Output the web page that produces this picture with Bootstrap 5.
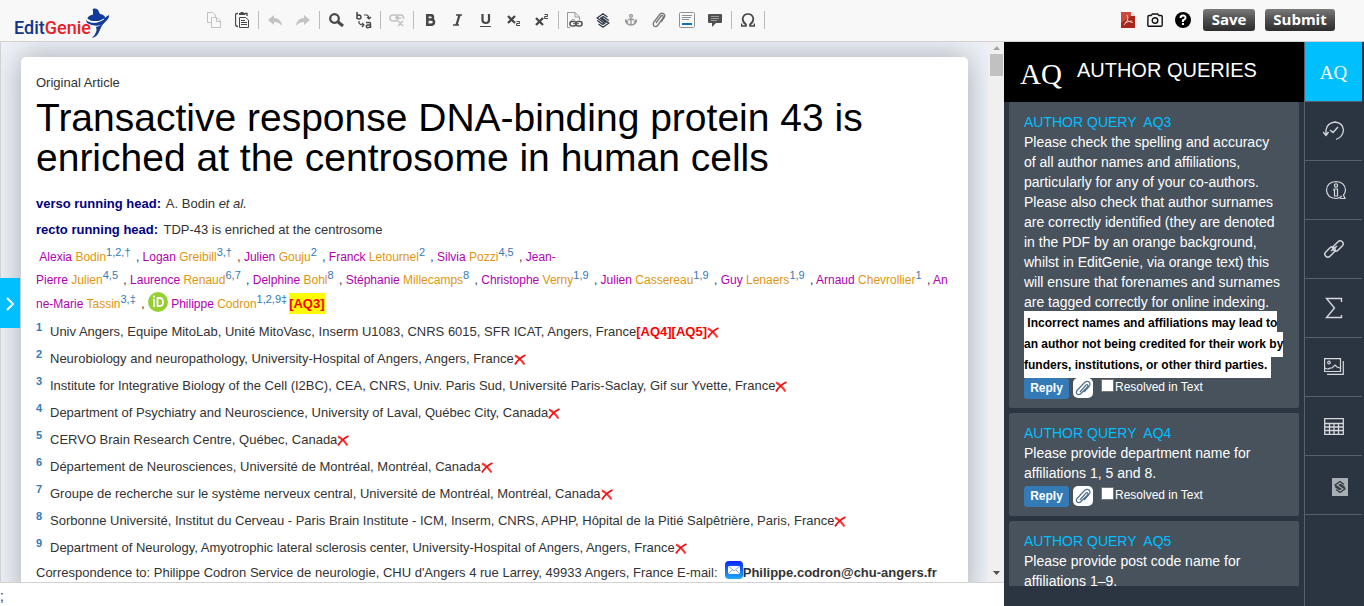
<!DOCTYPE html>
<html lang="en">
<head>
<meta charset="utf-8">
<meta name="viewport" content="width=device-width, initial-scale=1">
<title>EditGenie</title>
<link href="https://cdn.jsdelivr.net/npm/bootstrap@5.3.0/dist/css/bootstrap.min.css" rel="stylesheet">
<style>
body{font-family:"Liberation Sans",Arial,sans-serif;font-size:13px;line-height:20px;color:#333;background:#fff}
button{font:inherit}
.topbar{background:#f8f8f8;border-bottom:1px solid #d1d1d1;height:42px;padding:0 29px 1px 14px}
.logo{font-family:Roboto,"Liberation Sans",sans-serif;font-size:18px;font-weight:500;line-height:24px;color:#14348c;padding-top:16px;width:186px}
.logo b{font-weight:500;color:#ee1c25}
.logo svg{position:absolute;left:72px;top:8px}
.tool{width:28px;height:28px;padding:0;border:0;background:none;display:flex;align-items:center;justify-content:center;flex:none;color:#474747}
.tool.off{color:#c2c2c2}
.sep{width:1px;height:18px;background:#bcbcbc;margin:0 2px;flex:none}
.act{border:0;border-radius:3px;background:linear-gradient(#7a7a7a,#4c4c4c 50%,#2c2c2c);color:#fff;font-family:"Open Sans",sans-serif;font-weight:700;font-size:15px;line-height:20px;height:22px;padding:0 0 2px}
.act.save{width:52px}.act.submit{width:70px;margin-left:10px}
.plain{border:0;background:none;padding:0;display:flex}
.pdf{margin-right:3px}
.desk{background:#eef2f8;border-left:1px solid #d1d1d1;border-bottom:1px solid #d1d1d1}
.paper{background:#fff;margin:15px 20px 0;padding:16px 15px 15px;border-radius:5px 5px 0 0;box-shadow:0 0 30px #a4a8ae}
.paper h1{font-size:39px;line-height:40px;color:#000;font-weight:400;margin:5px 0 16px}
.track{width:16px;background:#f0f0f0}
.thumb{height:22px;width:13px;background:#c1c1c1}
.runhead{line-height:20px;margin-bottom:6px}
.runhead b{color:#000080;margin-right:2px}
.authors{font-size:12px;line-height:23px;margin:0 0 2px;white-space:nowrap}
.authors i{font-style:normal;color:#b000b0}
.authors u{text-decoration:none;color:#e0960c}
sup{color:#337ab7;line-height:0;font-size:11px;top:-5px}
.authors sup{margin-right:2px}
.aff{display:flex;line-height:27px;white-space:nowrap}
.aff sup{width:14px;font-size:11px;font-weight:700;line-height:19px;top:0}
.aff svg,.orcid{flex:none}
.cross{width:12px;height:12px;margin:9px 0 0}
.corr{margin-top:2px}
.aq{color:#f00;font-weight:700}
.aq.now{background:#ff0;padding:3px 0;font-size:13px}
.drawer{left:0;top:236px;width:20px;height:50px;border:0;padding:0;background:#00bfff;z-index:2}
.foot{height:23px;font-size:14px;line-height:27px}
.panel{width:300px;background:#2b3541}
.rail{width:60px;background:#2b3541;border-left:1px solid #56616c;padding-right:2px}
.phead{background:#000;color:#fff;height:60px;padding:0 16px}
.phead span{font-family:"Liberation Serif",serif;font-size:29px;padding-top:3px}
.phead h2{font-size:20px;line-height:24px;margin:0 0 4px 15px;font-weight:400}
.queries{padding:0 5px;margin-bottom:20px}
.query{background:#47525d;color:#fff;border-radius:2px;padding:10px 15px 9px;margin-bottom:5px;font-size:14px;line-height:20px}
.query h3{font-size:14px;line-height:20px;margin:0;font-weight:400;color:#00bfff;white-space:pre}
.query p{margin:0}
.query .warn{font-size:12px;line-height:21px;font-weight:700;color:#000;margin:1px 0 -1px}
.warn mark{padding:5px 0 6px;background:#fff;color:#000}
.reply{border:0;border-radius:3px;background:#337ab7;color:#fff;font-weight:700;font-size:12px;line-height:21px;width:45px;height:21px;padding:0}
.clip{width:20px;height:20px;border:0;border-radius:5px;background:#fff;padding:0;margin:0 8px 0 4px;display:flex;align-items:center;justify-content:center}
.query .form-check-input{width:13px;height:13px;border-radius:0;border:1px solid #777;margin:1px 0 0;float:none}
.query label{font-size:12px;line-height:18px;margin-left:1px}
.ctl{margin-top:3px}
.rbtn{height:59px;border:0;border-bottom:1px solid #56616c;background:none;color:#d5d9dc;padding:0;display:flex;align-items:center;justify-content:center}
.rbtn.on{height:60px;background:#00bfff;color:#fff;font-family:"Liberation Serif",serif;font-size:19px;padding-top:3px}
svg{display:block}
.inl{display:inline-block}
.orcid{margin:-6px 0 -2px;vertical-align:-2px}
.mail{margin:-4px 0 0;vertical-align:-2px}
</style>
</head>
<body class="vh-100 d-flex flex-column overflow-hidden">
<header class="topbar d-flex align-items-center flex-shrink-0">
  <div class="logo position-relative flex-shrink-0">Edit<b>Genie</b>
    <svg width="24" height="31" viewBox="0 0 24 31"><path d="M7 3Q6 1 8 0.500Q12 0 13 4L14 6Q19 7 19 9.500Q18 12 12 13Q4 13.500 1.500 10.500Q2 7.500 7 6.500Z" fill="#123a9a"/><path d="M0 12Q8 17 16 12Q21 8 23 7Q24 10 17 16Q10 20 1 15Z" fill="#123a9a"/><path d="M1 12.500Q9 17 18 11" fill="none" stroke="#fff"/><path d="M10 19Q17 17 16 14L20 12Q15 18 13 24Q11 29 6 30Q12 24 10 19Z" fill="#1a3f92"/></svg>
  </div>
  <div class="d-flex align-items-center" role="toolbar" aria-label="Formatting">
    <button class="tool off" aria-label="Copy"><svg width="14" height="16" fill="none" stroke="currentColor"><path d="M4 10.500H.5V.5H6L8.500 3V5M4.500 5.500H10L13.500 9V15.500H4.500ZM9.500 5.500V9.500H13.500"/></svg></button>
    <button class="tool" aria-label="Paste"><svg width="14" height="16" fill="none" stroke="currentColor"><path d="M3 1.500H2Q.5 1.500.5 3V12Q.5 14.500 3 14.500M10 1.500H12V4" stroke-width="1.300"/><path d="M4 3V1H5.500V0H8.500V1H10V3Z" fill="currentColor" stroke="none"/><path d="M4.500 5.500H10.500L13.500 8V15.500H4.500ZM6 8.500H10M6 10.500H12M6 12.500H12"/></svg></button>
    <span class="sep"></span>
    <button class="tool off" aria-label="Undo"><svg width="14" height="11" fill="currentColor"><path d="M0 5 6 0V3Q13 3 14 11Q11 7 6 7V10Z"/></svg></button>
    <button class="tool off" aria-label="Redo"><svg width="14" height="11" fill="currentColor"><path d="M14 5 8 0V3Q1 3 0 11Q3 7 8 7V10Z"/></svg></button>
    <span class="sep"></span>
    <button class="tool" aria-label="Find"><svg width="15" height="14" fill="none" stroke="currentColor"><circle cx="5.500" cy="5.500" r="4.300" stroke-width="2.300"/><path d="M9 9 14 13" stroke-width="3"/></svg></button>
    <button class="tool" aria-label="Replace"><svg width="16" height="17" fill="none" stroke="currentColor" stroke-width="1.500"><path d="M1 0V7M1 4Q2 3 3.500 3Q5 3.500 5 5Q5 7 3 7Q2 7 1 6M10 10.500H13.500Q14.500 10.500 14.500 12V16M14.500 13H11.500Q10 13.500 10.500 15Q11.500 16.500 14.500 14.500"/><path d="M8 3H11Q13 4 13 6M11 5 13 7 15 5M3 9V11Q4 13 7 13M6 11 8 13 6 15" stroke-width="1.200"/></svg></button>
    <span class="sep"></span>
    <button class="tool off" aria-label="Unlink"><svg width="16" height="14" fill="none" stroke="currentColor" stroke-width="1.500"><rect x="1" y="2" width="8" height="6" rx="3"/><path d="M6 5H12M7 4Q8 2 10 2H11.500Q14.500 2 14.500 5V6M9 8 14 13M14 8 9 13"/></svg></button>
    <span class="sep"></span>
    <button class="tool" aria-label="Bold"><svg width="11" height="12" fill="none" stroke="currentColor" stroke-width="2.500"><path d="M2.300 1.200V10.800M1 1.200H6Q8 1.200 8 3.500Q8 5.500 6 5.500H3M6 5.500Q9 5.500 9 8Q9 10.800 6 10.800H1"/></svg></button>
    <button class="tool" aria-label="Italic"><svg width="10" height="12" fill="none" stroke="currentColor"><path d="M3 1H9M0 11H6" stroke-width="1.500"/><path d="M6.500 1 3.500 11" stroke-width="2.300"/></svg></button>
    <button class="tool" aria-label="Underline"><svg width="12" height="13" fill="none" stroke="currentColor"><path d="M2.500 0V6Q2.500 9 6 9Q9 9 9 6V0" stroke-width="2.200"/><path d="M0 12.500H11"/></svg></button>
    <button class="tool" aria-label="Subscript"><svg width="14" height="12" fill="none" stroke="currentColor"><path d="M1 2 8 9M8 2 1 9" stroke-width="2.300"/><path d="M9.500 7.500H12.500V9.500H9.500V11.500H13"/></svg></button>
    <button class="tool" aria-label="Superscript"><svg width="14" height="12" fill="none" stroke="currentColor"><path d="M1 4 8 11M8 4 1 11" stroke-width="2.300"/><path d="M9.500.5H12.500V2.500H9.500V4.500H13"/></svg></button>
    <span class="sep"></span>
    <button class="tool" aria-label="Document link"><svg width="16" height="16" fill="none" stroke="#999"><path d="M.5 15.500V.5H8L12.500 5V8M8 .5V5H12.500M3 10Q5 6 8 8M.5 15.500H3"/><rect x="3" y="9.500" width="6" height="4.500" rx="2" stroke="#555" stroke-width="1.600"/><rect x="9" y="9.500" width="6" height="4.500" rx="2" stroke="#555" stroke-width="1.600"/><path d="M6 11.700H12" stroke="#555"/></svg></button>
    <button class="tool" aria-label="Insert section"><svg width="14" height="15" viewBox="0 0 14 15" fill="none" stroke="#303a48" stroke-width="1.300"><path d="M11.500 4 7 .8 1.200 5 8.500 10.200 6.800 11.400 1.200 7.500M2.500 11 7 14.200 12.800 10 5.500 4.800 7.200 3.600 12.800 7.500M4 5 10.300 9.800"/></svg></button>
    <button class="tool" aria-label="Anchor"><svg width="12" height="12" fill="none" stroke="#999" stroke-width="1.400"><circle cx="6" cy="2" r="1.400"/><path d="M6 3.500V11M3 5.500H9M1 6V8Q3 11 6 11Q9 11 11 8V6M0 8 1 6 3 8M9 8 11 6 12 8"/></svg></button>
    <button class="tool" aria-label="Attach"><svg width="14" height="16" fill="none" stroke="#777" stroke-width="1.300"><path d="M4 11 9 4Q10 3 11 4Q11.500 5 11 6L6 13Q4 15.500 2 14Q.5 12 2 10L8 2Q10 .5 12 2Q13.500 3.500 12 6L9 10"/></svg></button>
    <button class="tool" aria-label="Template"><svg width="16" height="16" fill="none" stroke="#8b9196"><rect x=".5" y=".5" width="15" height="15" rx="1"/><path d="M3 3.500H13M3 5.500H12M3 7.500H10"/><path d="M3 12H13" stroke="#0b6fc4" stroke-width="2"/></svg></button>
    <button class="tool" aria-label="Comment"><svg width="14" height="13"><path d="M1 0H13Q14 0 14 1V8Q14 9 13 9H8L4 13V9H1Q0 9 0 8V1Q0 0 1 0Z" fill="#505050"/><path d="M3 2.500H11M3 4.500H11M3 6.500H9" stroke="#999"/></svg></button>
    <span class="sep"></span>
    <button class="tool" aria-label="Special character"><svg width="14" height="14" fill="none" stroke="currentColor" stroke-width="1.700"><path d="M.5 10.500V13H5V11.500Q1.500 9 1.700 5.500Q2.500 1 7 1Q11.500 1 12.300 5.500Q12.500 9 9 11.500V13H13.500V10.500"/></svg></button>
    <span class="sep"></span>
  </div>
  <div class="d-flex align-items-center ms-auto">
    <button class="plain" aria-label="PDF"><svg width="14" height="16"><path d="M0 0H10L14 4V16H0Z" fill="#a8261c"/><path d="M0 0H10V4L0 11Z" fill="#cb4a3e"/><path d="M10 0 14 4H10Z" fill="#eee"/><path d="M6 3Q8 6 6 9L3 13M6 8Q8 10 12 10.500M4 11Q8 9 11 9" stroke="#fbe4e0" fill="none" stroke-width=".8"/></svg></button>
    <button class="plain px-0 mx-1 ps-2" aria-label="Screenshot"><svg width="16" height="14" fill="none" stroke="#111" stroke-width="1.400"><path d="M1 3.500Q1 2.500 2 2.500H4L5.500 1H10.500L12 2.500H14Q15.200 2.500 15.200 3.500V12Q15.200 13.200 14 13.200H2Q.8 13.200.8 12Z"/><circle cx="8" cy="7.500" r="2.800"/></svg></button>
    <button class="plain mx-1 ps-1 pe-2" aria-label="Help"><svg width="16" height="16"><circle cx="8" cy="8" r="8"/><path d="M5.500 6Q5.500 3.500 8 3.500Q10.700 3.500 10.500 6Q10 7.500 8 8.200V10M8 11V13" fill="none" stroke="#fff" stroke-width="2"/></svg></button>
    <button class="act save">Save</button>
    <button class="act submit">Submit</button>
  </div>
</header>

<div class="d-flex flex-grow-1 overflow-hidden position-relative">
  <button class="drawer position-absolute" aria-label="Open drawer"><svg width="20" height="50" fill="none" stroke="#fff" stroke-width="2"><path d="M7 20 13 26 7 32"/></svg></button>
  <main class="d-flex flex-column flex-grow-1 overflow-hidden">
    <div class="desk d-flex flex-grow-1 overflow-hidden">
      <div class="flex-grow-1 overflow-hidden">
      <article class="paper">
        <div>Original Article</div>
        <h1>Transactive response DNA-binding protein 43 is enriched at the centrosome in human cells</h1>
        <div class="runhead"><b>verso running head:</b> A. Bodin <em>et al.</em></div>
        <div class="runhead"><b>recto running head:</b> TDP-43 is enriched at the centrosome</div>
        <p class="authors">&nbsp;<i>Alexia</i> <u>Bodin</u><sup>1,2,†</sup> , <i>Logan</i> <u>Greibill</u><sup>3,†</sup> , <i>Julien</i> <u>Gouju</u><sup>2</sup> , <i>Franck</i> <u>Letournel</u><sup>2</sup> , <i>Silvia</i> <u>Pozzi</u><sup>4,5</sup> , <i>Jean-<br>Pierre</i> <u>Julien</u><sup>4,5</sup> , <i>Laurence</i> <u>Renaud</u><sup>6,7</sup> , <i>Delphine</i> <u>Bohl</u><sup>8</sup> , <i>Stéphanie</i> <u>Millecamps</u><sup>8</sup> , <i>Christophe</i> <u>Verny</u><sup>1,9</sup> , <i>Julien</i> <u>Cassereau</u><sup>1,9</sup> , <i>Guy</i> <u>Lenaers</u><sup>1,9</sup> , <i>Arnaud</i> <u>Chevrollier</u><sup>1</sup> , <i>An<br>ne-Marie</i> <u>Tassin</u><sup>3,‡</sup> , <svg class="inl orcid" width="20" height="20"><circle cx="10" cy="10" r="10" fill="#97cf32"/><g fill="none" stroke="#fff" stroke-width="1.800"><path d="M6 7V15M9.500 6H11.500Q15 6 15 10Q15 14.200 11.500 14.200H9.500Z"/></g><circle cx="6" cy="4.700" r="1.100" fill="#fff"/></svg> <i>Philippe</i> <u>Codron</u><sup>1,2,9‡</sup><span class="aq now">[AQ3]</span></p>
        <div class="aff"><sup>1</sup>Univ Angers, Equipe MitoLab, Unité MitoVasc, Inserm U1083, CNRS 6015, SFR ICAT, Angers, France<span class="aq">[AQ4][AQ5]</span><svg class="cross"><use href="#x"/></svg></div>
        <div class="aff"><sup>2</sup>Neurobiology and neuropathology, University-Hospital of Angers, Angers, France<svg class="cross"><use href="#x"/></svg></div>
        <div class="aff"><sup>3</sup>Institute for Integrative Biology of the Cell (I2BC), CEA, CNRS, Univ. Paris Sud, Université Paris-Saclay, Gif sur Yvette, France<svg class="cross"><use href="#x"/></svg></div>
        <div class="aff"><sup>4</sup>Department of Psychiatry and Neuroscience, University of Laval, Québec City, Canada<svg class="cross"><use href="#x"/></svg></div>
        <div class="aff"><sup>5</sup>CERVO Brain Research Centre, Québec, Canada<svg class="cross"><use href="#x"/></svg></div>
        <div class="aff"><sup>6</sup>Département de Neurosciences, Université de Montréal, Montréal, Canada<svg class="cross"><use href="#x"/></svg></div>
        <div class="aff"><sup>7</sup>Groupe de recherche sur le système nerveux central, Université de Montréal, Montréal, Canada<svg class="cross"><use href="#x"/></svg></div>
        <div class="aff"><sup>8</sup>Sorbonne Université, Institut du Cerveau - Paris Brain Institute - ICM, Inserm, CNRS, APHP, Hôpital de la Pitié Salpêtrière, Paris, France<svg class="cross"><use href="#x"/></svg></div>
        <div class="aff"><sup>9</sup>Department of Neurology, Amyotrophic lateral sclerosis center, University-Hospital of Angers, Angers, France<svg class="cross"><use href="#x"/></svg></div>
        <div class="corr text-nowrap">Correspondence to: Philippe Codron Service de neurologie, CHU d'Angers 4 rue Larrey, 49933 Angers, France E-mail: &nbsp;<svg class="inl mail" width="18" height="18"><defs><linearGradient id="m" x2="0" y2="1"><stop stop-color="#0526ff"/><stop offset="1" stop-color="#22a8f8"/></linearGradient></defs><rect width="18" height="18" rx="4" fill="url(#m)"/><rect x="3" y="5" width="12" height="8" rx="1" fill="#fff"/><path d="M3 5 9 10 15 5M3 13 7 9M15 13 11 9" fill="none" stroke="#78a8e8"/></svg><b>Philippe.codron@chu-angers.fr</b></div>
      </article>
      </div>
      <div class="track d-flex flex-column align-items-center flex-shrink-0" aria-hidden="true">
        <svg width="16" height="12"><path d="M5 8 9 4 12 8Z" fill="#a3a3a3"/></svg>
        <div class="thumb"></div>
        <svg class="mt-auto" width="16" height="14"><path d="M5 3H12L8.500 7Z" fill="#505050"/></svg>
      </div>
    </div>
    <div class="foot flex-shrink-0">;</div>
  </main>
  <aside class="panel d-flex flex-column flex-shrink-0">
    <div class="phead d-flex align-items-center flex-shrink-0"><span>AQ</span><h2>AUTHOR QUERIES</h2></div>
    <div class="queries overflow-hidden flex-grow-1">
      <section class="query"><h3>AUTHOR QUERY  AQ3</h3>
        <p>Please check the spelling and accuracy of all author names and affiliations, particularly for any of your co-authors. Please also check that author surnames are correctly identified (they are denoted in the PDF by an orange background, whilst in EditGenie, via orange text) this will ensure that forenames and surnames are tagged correctly for online indexing.</p>
        <p class="warn"><mark>&nbsp;Incorrect names and affiliations may lead to an author not being credited for their work by funders, institutions, or other third parties.&nbsp;</mark></p>
        <div class="ctl d-flex"><button class="reply">Reply</button><button class="clip" aria-label="Attach file"><svg width="16" height="16"><use href="#clip"/></svg></button><input class="form-check-input" type="checkbox" id="r3"><label for="r3">Resolved in Text</label></div>
      </section>
      <section class="query"><h3>AUTHOR QUERY  AQ4</h3>
        <p>Please provide department name for affiliations 1, 5 and 8.</p>
        <div class="ctl d-flex"><button class="reply">Reply</button><button class="clip" aria-label="Attach file"><svg width="16" height="16"><use href="#clip"/></svg></button><input class="form-check-input" type="checkbox" id="r4"><label for="r4">Resolved in Text</label></div>
      </section>
      <section class="query"><h3>AUTHOR QUERY  AQ5</h3>
        <p>Please provide post code name for affiliations 1–9.</p>
      </section>
    </div>
  </aside>
  <nav class="rail d-flex flex-column flex-shrink-0" aria-label="Panels">
    <button class="rbtn on">AQ</button>
    <button class="rbtn" aria-label="History"><svg width="22" height="20" fill="none" stroke="currentColor" stroke-width="1.300"><path d="M3 14V9Q4 2 12 1Q20 2 20.500 9Q20 16 13 18.500M0 11 3 14.500 5.500 11M7 9 10 11.500 15 6"/></svg></button>
    <button class="rbtn ps-1" aria-label="Information"><svg width="22" height="20" fill="none" stroke="currentColor" stroke-width="1.200"><path d="M17 16Q14 18.500 11 18.500Q2 18 1.500 10Q2 2 11 1.500Q20 2 20.500 10Q20.300 13 18.500 15L20 18.500H15"/><circle cx="11" cy="5.500" r="1.600"/><path d="M9 9H12.500V16H9.500V10.500H9Z"/></svg></button>
    <button class="rbtn" aria-label="Links"><svg width="20" height="20" fill="none" stroke="currentColor" stroke-width="1.400"><rect x="8" y="4" width="12" height="6" rx="3" transform="rotate(-45 14 7)"/><rect x="0" y="10" width="12" height="6" rx="3" transform="rotate(-45 6 13)"/><path d="M7 12 13 7"/></svg></button>
    <button class="rbtn" aria-label="Equations"><svg width="18" height="22" fill="none" stroke="currentColor" stroke-width="1.400"><path d="M16.500 5V1.500H1.500L9.500 11 1.500 20.500H16.500V18"/></svg></button>
    <button class="rbtn" aria-label="Figures"><svg width="20" height="18" fill="none" stroke="currentColor" stroke-width="1.200"><path d="M.6.6H16.500V13.500H.6ZM19.300 3V16.400H3M1 10Q4 12 6 10L8 10 11 7 13 9 16 10"/><circle cx="5" cy="4.500" r="1.300"/></svg></button>
    <button class="rbtn" aria-label="Tables"><svg width="20" height="17" fill="none" stroke="currentColor" stroke-width="1.300"><path d="M.7.700H19.300V16.300H.7ZM.7 5.500H19.300M.7 9H19.300M.7 12.500H19.300M5.500 5.500V16M10 5.500V16M14.500 5.500V16"/></svg></button>
    <button class="rbtn ps-2 pt-1" aria-label="Sections"><svg class="ms-1" width="16" height="18"><rect width="16" height="18" fill="#a9aeb1"/><path d="M12 6.500 8 3.500 3 7 9.500 11.500M4 11.500 8 14.500 13 11 6.500 6.500M3 8.500 8 12M13 9.500 8 6" fill="none" stroke="#303a42" stroke-width="1.200"/></svg></button>
  </nav>
</div>
<svg width="0" height="0" class="position-absolute" aria-hidden="true"><defs>
  <g id="x"><path d="M1 1.500Q6 4 10.500 10.500" stroke="#f33" stroke-width="2" fill="none"/><path d="M11.500 1Q5 4 1 10.500" stroke="#e11" stroke-width="1.800" fill="none"/></g>
  <g id="clip" fill="none" stroke="#51708c" stroke-width="1.200"><path d="M5 12 11 5Q12.500 4 13 5.500Q13 6.500 12 7.500L6 13.500Q4 15.500 2 14Q.5 12 2.500 10L9.500 2.500Q12 .5 14 2Q16 4 14 6.500L9 12"/></g>
</defs></svg>
<script src="https://cdn.jsdelivr.net/npm/bootstrap@5.3.0/dist/js/bootstrap.bundle.min.js"></script>
</body>
</html>
